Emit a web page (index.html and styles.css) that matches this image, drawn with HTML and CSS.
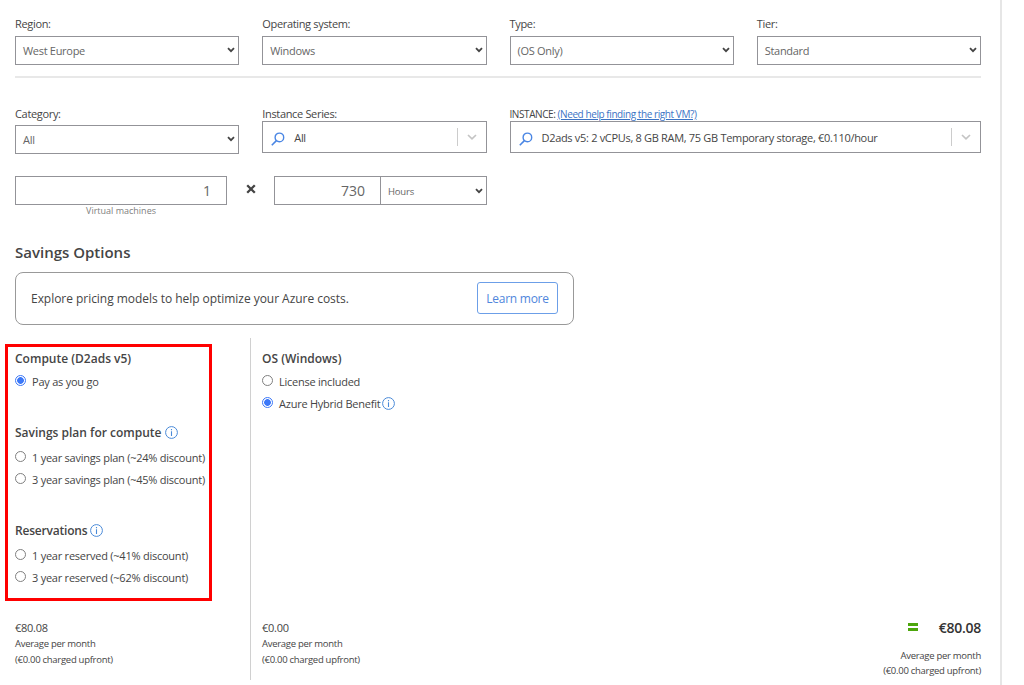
FILE: index.html
```html
<!DOCTYPE html>
<html lang="en">
<head>
    <meta charset="UTF-8">
    <meta name="viewport" content="width=device-width, initial-scale=1.0">
    <title>Virtual Machines pricing</title>
    <link rel="stylesheet" href="styles.css">
</head>
<body>
    <svg class="defs">
        <symbol id="chevron" viewBox="0 0 8 6"><path d="M1 1.2 L4 4.2 L7 1.2" fill="none" stroke="currentColor" stroke-width="1.8"/></symbol>
        <symbol id="arrow" viewBox="0 0 10 6"><path d="M1 1 L5 4.8 L9 1" fill="none" stroke="currentColor" stroke-width="1.7"/></symbol>
        <symbol id="search" viewBox="0 0 14 14"><circle cx="8.4" cy="5.4" r="4.3" fill="none" stroke="currentColor" stroke-width="1.4"/><path d="M5.4 8.6 L.8 13.2" fill="none" stroke="currentColor" stroke-width="1.6"/></symbol>
        <symbol id="info" viewBox="0 0 13 13"><circle cx="6.5" cy="6.5" r="5.9" fill="none" stroke="currentColor"/><path d="M6.5 5.3 V10 M6.5 3 V4.2" stroke="currentColor" stroke-width="1.1"/></symbol>
    </svg>

    <div class="calculator">
        <div class="row options">
            <div class="field">
                <label>Region:</label>
                <div class="select"><span>West Europe</span><svg><use href="#chevron"/></svg></div>
            </div>
            <div class="field">
                <label>Operating system:</label>
                <div class="select"><span>Windows</span><svg><use href="#chevron"/></svg></div>
            </div>
            <div class="field">
                <label>Type:</label>
                <div class="select"><span>(OS Only)</span><svg><use href="#chevron"/></svg></div>
            </div>
            <div class="field">
                <label>Tier:</label>
                <div class="select"><span>Standard</span><svg><use href="#chevron"/></svg></div>
            </div>
        </div>

        <div class="row instances">
            <div class="field category">
                <label>Category:</label>
                <div class="select"><span>All</span><svg><use href="#chevron"/></svg></div>
            </div>
            <div class="field">
                <label>Instance Series:</label>
                <div class="search-select">
                    <svg class="search"><use href="#search"/></svg>
                    <span class="value">All</span>
                    <span class="open"><svg><use href="#arrow"/></svg></span>
                </div>
            </div>
            <div class="field wide">
                <label class="small"><span class="upper">INSTANCE:</span> <a href="#">(Need help finding the right VM?)</a></label>
                <div class="search-select">
                    <svg class="search"><use href="#search"/></svg>
                    <span class="value">D2ads v5: 2 vCPUs, 8 GB RAM, 75 GB Temporary storage, €0.110/hour</span>
                    <span class="open"><svg><use href="#arrow"/></svg></span>
                </div>
            </div>
        </div>

        <div class="quantity">
            <div class="machines">
                <div class="number">1</div>
                <div class="hint">Virtual machines</div>
            </div>
            <svg class="times" viewBox="0 0 10 10"><path d="M1.2 1.2 L8.8 8.8 M8.8 1.2 L1.2 8.8" stroke="currentColor" stroke-width="2.3"/></svg>
            <div class="hours">
                <div class="number">730</div>
                <div class="select"><span>Hours</span><svg><use href="#chevron"/></svg></div>
            </div>
        </div>

        <h2>Savings Options</h2>
        <div class="banner">
            <span>Explore pricing models to help optimize your Azure costs.</span>
            <button>Learn more</button>
        </div>

        <div class="savings">
            <div class="column compute">
                <div class="highlight"></div>
                <h3>Compute (D2ads v5)</h3>
                <label class="radio"><input type="radio" name="compute" checked><span>Pay as you go</span></label>
                <h3 class="plan">Savings plan for compute <svg class="info"><use href="#info"/></svg></h3>
                <label class="radio"><input type="radio" name="compute"><span>1 year savings plan (~24% discount)</span></label>
                <label class="radio"><input type="radio" name="compute"><span>3 year savings plan (~45% discount)</span></label>
                <h3 class="plan reservations">Reservations <svg class="info"><use href="#info"/></svg></h3>
                <label class="radio"><input type="radio" name="compute"><span>1 year reserved (~41% discount)</span></label>
                <label class="radio"><input type="radio" name="compute"><span>3 year reserved (~62% discount)</span></label>
                <div class="cost">
                    <div class="price">€80.08</div>
                    <div>Average per month</div>
                    <div>(€0.00 charged upfront)</div>
                </div>
            </div>
            <div class="column os">
                <h3>OS (Windows)</h3>
                <label class="radio"><input type="radio" name="os"><span>License included</span></label>
                <label class="radio"><input type="radio" name="os" checked><span>Azure Hybrid Benefit</span><svg class="info"><use href="#info"/></svg></label>
                <div class="cost">
                    <div class="price">€0.00</div>
                    <div>Average per month</div>
                    <div>(€0.00 charged upfront)</div>
                </div>
            </div>
            <div class="total">
                <div class="sum"><span class="equals"></span><strong>€80.08</strong></div>
                <div>Average per month</div>
                <div>(€0.00 charged upfront)</div>
            </div>
        </div>
    </div>
</body>
</html>
```
FILE: styles.css
```css
* {
    box-sizing: border-box;
}

body {
    margin: 0;
    height: 685px;
    overflow: hidden;
    background-color: #fff;
    color: #454545;
    font-family: 'Open Sans', 'Noto Sans', sans-serif;
    font-size: 11px;
    white-space: nowrap;
}

.defs {
    display: none;
}

.calculator {
    width: 1002px;
    height: 685px;
    padding: 16px 19px 0 15px;
    border-right: 2px solid #e6e6e6;
}

.row {
    display: grid;
    grid-template-columns: repeat(4, 1fr);
    column-gap: 23px;
}

.options {
    height: 62px;
    border-bottom: 2px solid #e8e8e8;
}

.instances {
    padding-top: 28px;
    height: 98px;
}

.wide {
    grid-column: span 2;
}

.field label {
    display: block;
    height: 20px;
    line-height: 16px;
    letter-spacing: -0.33px;
}

.instances label {
    height: 15px;
}

.instances .category label {
    height: 19px;
}

.field .small {
    font-size: 10px;
    letter-spacing: -0.42px;
}

a {
    color: #3b73c5;
}

.select {
    display: flex;
    align-items: center;
    justify-content: space-between;
    height: 29px;
    padding: 0 3px 0 7px;
    border: 1px solid #939398;
    color: #666;
    letter-spacing: -0.3px;
}

.select svg {
    width: 8px;
    height: 6px;
    margin-top: -1px;
    color: #444;
}

.search-select {
    display: flex;
    align-items: center;
    height: 32px;
    padding-left: 8px;
    border: 1px solid #939398;
}

.search {
    width: 14px;
    height: 14px;
    margin-top: 3px;
    color: #4a86e4;
}

.value {
    flex: 1;
    padding-left: 9px;
    letter-spacing: -0.31px;
}

.open {
    display: flex;
    align-items: center;
    justify-content: center;
    width: 29px;
    height: 18px;
    border-left: 1px solid #ccc;
    color: #c4c4c4;
}

.open svg {
    width: 10px;
    height: 6px;
}

.quantity {
    display: flex;
    align-items: flex-start;
}

.machines {
    width: 212px;
}

.number {
    height: 29px;
    padding-right: 15px;
    border: 1px solid #939398;
    color: #666;
    font-size: 14px;
    line-height: 28px;
    text-align: right;
}

.hint {
    color: #808080;
    font-size: 9px;
    line-height: 12px;
    text-align: center;
}

.times {
    width: 10px;
    height: 10px;
    margin: 8px 18px 0 19px;
    color: #444;
}

.hours {
    display: flex;
}

.hours .number {
    width: 107px;
}

.hours .select {
    width: 107px;
    margin-left: -1px;
    padding-top: 1px;
    font-size: 9.5px;
    letter-spacing: -0.2px;
}

h2 {
    margin: 23px 0 8px;
    font-size: 15px;
    font-weight: 600;
    line-height: 24px;
}

.banner {
    display: flex;
    align-items: center;
    justify-content: space-between;
    width: 559px;
    height: 53px;
    padding: 0 15px 1px;
    border: 1px solid #999;
    border-radius: 8px;
    font-size: 12px;
    letter-spacing: -0.04px;
}

button {
    width: 81px;
    height: 32px;
    padding: 0;
    border: 1px solid #6c9fe8;
    border-radius: 3px;
    background-color: #fff;
    color: #4f86dc;
    font: inherit;
    letter-spacing: -0.25px;
}

.savings {
    display: flex;
    height: 342px;
    margin-top: 13px;
}

.column {
    display: flex;
    flex-direction: column;
    padding-top: 10px;
}

.compute {
    position: relative;
    width: 236px;
    border-right: 1px solid #d0d0d0;
}

.os {
    flex: 1;
    padding-left: 11px;
}

/* red frame over the compute options */
.highlight {
    position: absolute;
    top: 6px;
    left: -10px;
    width: 207px;
    height: 257px;
    border: 3px solid #f00;
}

h3 {
    display: flex;
    align-items: center;
    gap: 3px;
    height: 22px;
    margin: 0;
    padding-bottom: 1px;
    font-size: 12px;
    font-weight: 600;
}

.plan {
    margin: 30px 0 2px;
}

.reservations {
    letter-spacing: -0.2px;
}

.radio {
    display: flex;
    align-items: center;
    height: 22px;
    letter-spacing: -0.24px;
}

.radio input {
    appearance: none;
    width: 11px;
    height: 11px;
    margin: 0 6px 2px 0;
    border: 1px solid #808080;
    border-radius: 50%;
}

.radio input:checked {
    border-color: #3c78f8;
    background: radial-gradient(circle, #3c78f8 3px, #fff 3.7px);
}

.info {
    width: 13px;
    height: 13px;
    color: #4a8ad8;
}

.radio .info {
    margin-left: 2px;
}

.cost {
    margin-top: auto;
    padding-bottom: 12px;
    font-size: 9.5px;
    line-height: 16px;
    letter-spacing: -0.28px;
}

.price {
    font-size: 11px;
}

.total {
    display: flex;
    flex-direction: column;
    justify-content: flex-end;
    padding-bottom: 2px;
    font-size: 9.5px;
    line-height: 15px;
    letter-spacing: -0.28px;
    text-align: right;
}

.sum {
    display: flex;
    align-items: center;
    justify-content: flex-end;
    height: 24px;
    margin-bottom: 9px;
}

.sum strong {
    color: #333;
    font-size: 14px;
    font-weight: 600;
}

.equals {
    width: 10px;
    height: 8px;
    margin-right: 21px;
    border: solid #4ca60c;
    border-width: 3px 0;
}
```
